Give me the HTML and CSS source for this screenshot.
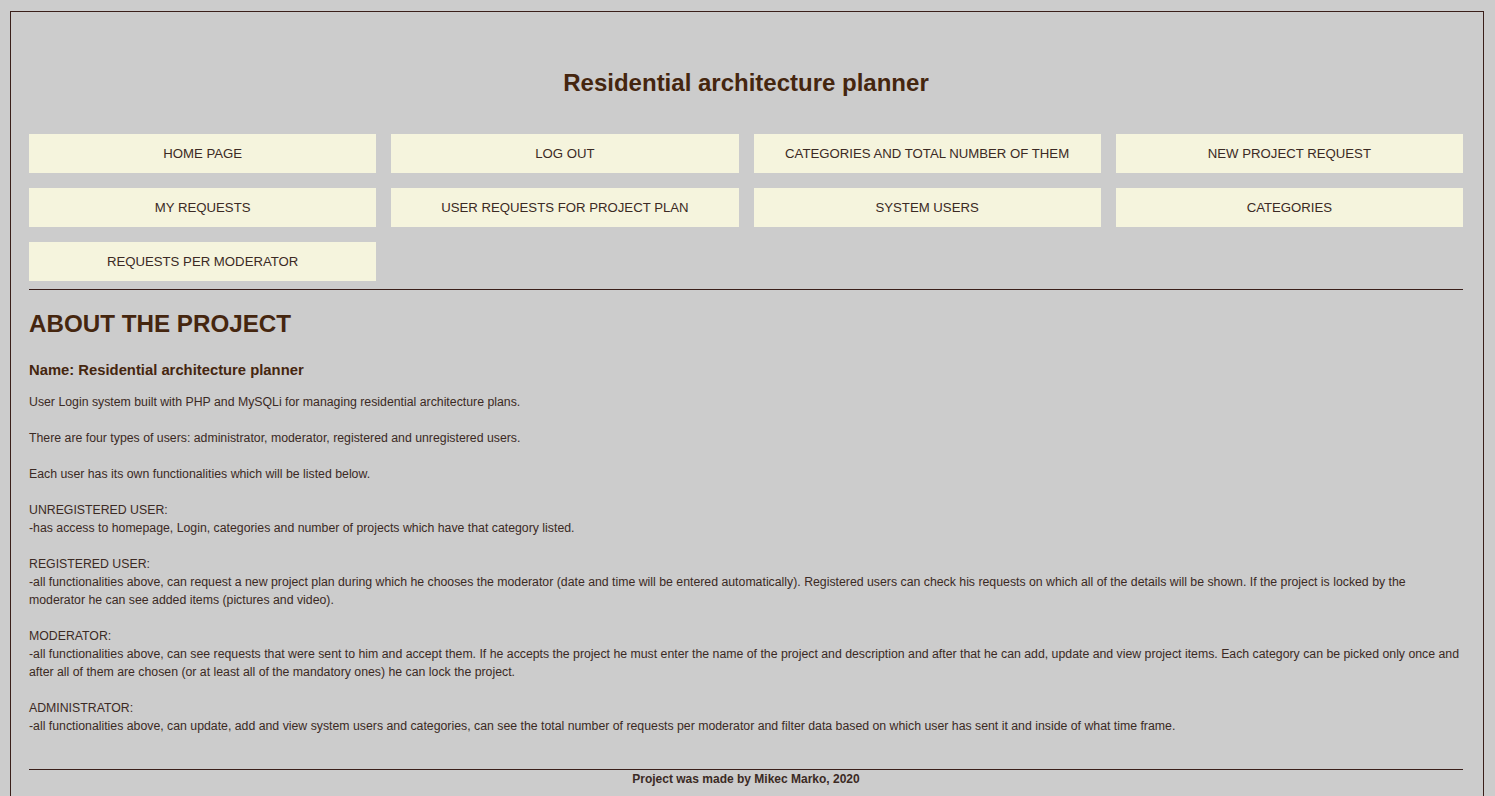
FILE: index.html
```html
<!DOCTYPE html>
<html lang="en">
<head>
<meta charset="utf-8">
<title>Residential architecture planner</title>
<link rel="stylesheet" href="styles.css">
</head>
<body>
<div class="page">
  <header class="header">
    <h1 class="title">Residential architecture planner</h1>
  </header>
  <nav class="nav">
    <a class="nav-btn" href="#">HOME PAGE</a>
    <a class="nav-btn" href="#">LOG OUT</a>
    <a class="nav-btn" href="#">CATEGORIES AND TOTAL NUMBER OF THEM</a>
    <a class="nav-btn" href="#">NEW PROJECT REQUEST</a>
    <a class="nav-btn" href="#">MY REQUESTS</a>
    <a class="nav-btn" href="#">USER REQUESTS FOR PROJECT PLAN</a>
    <a class="nav-btn" href="#">SYSTEM USERS</a>
    <a class="nav-btn" href="#">CATEGORIES</a>
    <a class="nav-btn" href="#">REQUESTS PER MODERATOR</a>
  </nav>
  <hr class="rule">
  <main class="content">
    <h2 class="section-title">ABOUT THE PROJECT</h2>
    <h3 class="name">Name: Residential architecture planner</h3>
    <p class="text">User Login system built with PHP and MySQLi for managing residential architecture plans.</p>
    <p class="text">There are four types of users: administrator, moderator, registered and unregistered users.</p>
    <p class="text">Each user has its own functionalities which will be listed below.</p>
    <p class="text">UNREGISTERED USER:<br>-has access to homepage, Login, categories and number of projects which have that category listed.</p>
    <p class="text">REGISTERED USER:<br>-all functionalities above, can request a new project plan during which he chooses the moderator (date and time will be entered automatically). Registered users can check his requests on which all of the details will be shown. If the project is locked by the moderator he can see added items (pictures and video).</p>
    <p class="text">MODERATOR:<br>-all functionalities above, can see requests that were sent to him and accept them. If he accepts the project he must enter the name of the project and description and after that he can add, update and view project items. Each category can be picked only once and after all of them are chosen (or at least all of the mandatory ones) he can lock the project.</p>
    <p class="text">ADMINISTRATOR:<br>-all functionalities above, can update, add and view system users and categories, can see the total number of requests per moderator and filter data based on which user has sent it and inside of what time frame.</p>
  </main>
  <footer class="footer">
    <hr class="rule">
    <p class="credit">Project was made by Mikec Marko, 2020</p>
  </footer>
</div>
</body>
</html>
```

FILE: styles.css
```css
html, body {
  margin: 0;
  padding: 0;
  background: #cccccc;
}

body {
  font-family: "Liberation Sans", Arial, sans-serif;
  color: #3b2a24;
}

.page {
  margin: 11px 11px 0 10px;
  border: 1px solid #3a1f1a;
  border-bottom: none;
  padding: 0 20px 0 18px;
  min-height: 800px;
}

.header {
  padding-top: 56px;
  padding-bottom: 36px;
}

.title {
  margin: 0;
  text-align: center;
  font-size: 24px;
  line-height: 30px;
  font-weight: bold;
  color: #45260f;
}

.nav {
  display: grid;
  grid-template-columns: repeat(4, 1fr);
  column-gap: 15px;
  row-gap: 15px;
}

.nav-btn {
  display: flex;
  align-items: center;
  justify-content: center;
  height: 39px;
  background: #f5f4dd;
  color: #3b2a24;
  font-size: 13.2px;
  text-decoration: none;
}

.rule {
  border: none;
  border-top: 1px solid #3a1f1a;
  margin: 8px 0 0 0;
  height: 0;
}

.content {
  padding-top: 20px;
}

.section-title {
  margin: 0;
  font-size: 24.2px;
  line-height: 28px;
  font-weight: bold;
  color: #45260f;
}

.name {
  margin: 22px 0 0 0;
  font-size: 14.8px;
  line-height: 20px;
  font-weight: bold;
  color: #45260f;
}

.text {
  margin: 13px 0 0 0;
  font-size: 12.3px;
  line-height: 18px;
}

.text + .text {
  margin-top: 18px;
}

.footer {
  margin-top: 34px;
}

.footer .rule {
  margin: 0;
}

.credit {
  margin: 2px 0 0 0;
  text-align: center;
  font-size: 12px;
  line-height: 14px;
  font-weight: bold;
}
```
